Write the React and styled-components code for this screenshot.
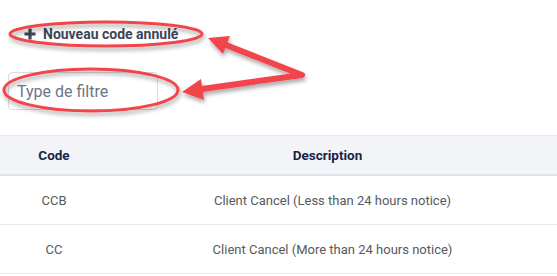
import React from 'react';
import styled, {createGlobalStyle} from 'styled-components';

const GlobalStyle = createGlobalStyle`
  body {
    margin: 0;
    background: #fff;
    font-family: Roboto, "Liberation Sans", sans-serif;
  }
`;

const rows = [
  {code: 'CCB', description: 'Client Cancel (Less than 24 hours notice)'},
  {code: 'CC', description: 'Client Cancel (More than 24 hours notice)'},
];

//annotation overlay: ellipses + arrows drawn on top of the screenshot
const Annotations = () => (
  <Overlay width="557" height="276" viewBox="0 0 557 276">
    <defs>
      <filter id="shadow" x="-20%" y="-50%" width="140%" height="200%">
        <feDropShadow dx="1" dy="3" stdDeviation="2" floodColor="#000" floodOpacity="0.35"/>
      </filter>
    </defs>
    <g filter="url(#shadow)" stroke="#f2454b" fill="none">
      <ellipse cx="106" cy="34" rx="96" ry="12" strokeWidth="3"/>
      <ellipse cx="91" cy="90" rx="87" ry="21" strokeWidth="3"/>
      <polyline points="226,45 302,75 202,89" strokeWidth="6" strokeLinejoin="round" strokeLinecap="round"/>
      <polygon points="208,38 230,36 223,54" fill="#f2454b" stroke="none"/>
      <polygon points="182,92 201,79 204,100" fill="#f2454b" stroke="none"/>
    </g>
  </Overlay>
);

const PlusIcon = () => (
  <svg width="12" height="12" viewBox="0 0 12 12">
    <path d="M6 0.5v11M0.5 6h11" stroke="#3d4556" strokeWidth="3.2"/>
  </svg>
);

const App = () => (
  <Page>
    <GlobalStyle/>
    <Toolbar>
      <AddButton>
        <PlusIcon/>
        <span>Nouveau code annulé</span>
      </AddButton>
    </Toolbar>
    <FilterRow>
      <FilterInput placeholder="Type de filtre"/>
    </FilterRow>
    <Table>
      <thead>
        <tr>
          <HeadCell width="108px">Code</HeadCell>
          <HeadCell $shift>Description</HeadCell>
        </tr>
      </thead>
      <tbody>
        {rows.map(r => (
          <Row key={r.code}>
            <Cell>{r.code}</Cell>
            <Cell>{r.description}</Cell>
          </Row>
        ))}
      </tbody>
    </Table>
    <Annotations/>
  </Page>
);

const Page = styled.div`
  position: relative;
  width: 557px;
  height: 276px;
  overflow: hidden;
`;

const Overlay = styled.svg`
  position: absolute;
  left: 0;
  top: 0;
  pointer-events: none;
`;

const Toolbar = styled.div`
  display: flex;
  padding: 23px 0 0 24px;
  height: 22px;
`;

const AddButton = styled.button`
  display: flex;
  align-items: center;
  gap: 7px;
  padding: 0;
  border: none;
  background: transparent;
  font-family: Roboto, "Liberation Sans", sans-serif;
  font-size: 14px;
  font-weight: 700;
  color: #3d4556;
  cursor: pointer;
`;

const FilterRow = styled.div`
  display: flex;
  padding: 27px 0 0 8px;
`;

const FilterInput = styled.input`
  box-sizing: border-box;
  width: 150px;
  height: 38px;
  padding: 0 8px;
  border: 1px solid #d9dce2;
  border-radius: 4px;
  font-family: Roboto, "Liberation Sans", sans-serif;
  font-size: 16px;
  color: #333;
  outline: none;
  &::placeholder {
    color: #6b7588;
  }
`;

const Table = styled.table`
  margin-top: 25px;
  width: 557px;
  border-collapse: collapse;
  font-size: 13px;
`;

const HeadCell = styled.th`
  width: ${p => p.width || 'auto'};
  height: 38px;
  padding: 0 ${p => (p.$shift ? '10px' : '0')} 0 0;
  background: #f3f4f8;
  border-top: 1px solid #e8eaef;
  border-bottom: 2px solid #dfe2e9;
  color: #1b2447;
  font-size: 13.5px;
  font-weight: 700;
  text-align: center;
`;

const Row = styled.tr`
  border-bottom: 1px solid #e6e8ec;
`;

const Cell = styled.td`
  height: 48px;
  padding: 0;
  text-align: center;
  color: #555a60;
`;

export default App;
